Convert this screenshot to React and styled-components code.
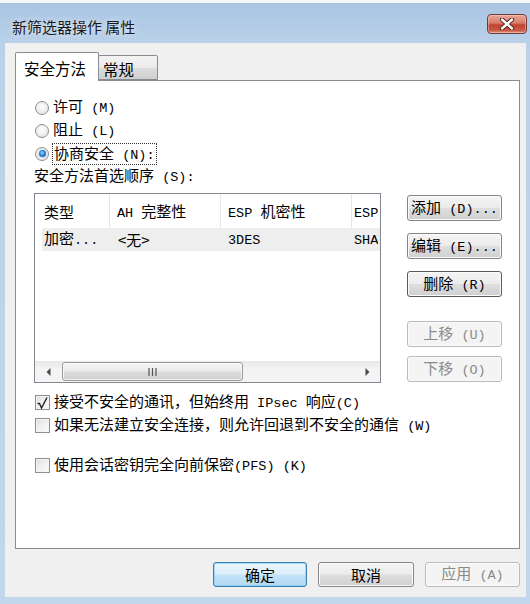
import React from "react";
import styled, { createGlobalStyle } from "styled-components";

const CJK = `"Noto Sans CJK SC", "Noto Sans", sans-serif`;
const MONO = `"Liberation Mono", "DejaVu Sans Mono", monospace`;

const Global = createGlobalStyle`
  html, body { margin: 0; padding: 0; background: #f3f5f8; }
  * { box-sizing: border-box; }
  #root { width: 530px; height: 604px; overflow: hidden; }
`;

const Window = styled.div`
  width: 530px;
  height: 601px;
  margin-top: 3px;
  background: linear-gradient(180deg, #a9c4e2 0px, #bad1e9 40px, #c2d7ec 100%);
  display: flex;
  flex-direction: column;
  font-family: ${CJK};
  color: #000;
`;

const TitleBar = styled.div`
  height: 40px;
  flex: none;
  display: flex;
  align-items: flex-start;
  justify-content: space-between;
  padding: 0 3px 0 12px;
`;

const Title = styled.div`
  padding-top: 13px;
  font-size: 15px;
  line-height: 22px;
  color: #1a1a1a;
  text-shadow: 0 0 6px rgba(255, 255, 255, 0.8);
`;

const CloseButton = styled.div`
  margin-top: 11px;
  width: 40px;
  height: 20px;
  border: 1px solid #6e3b3b;
  border-radius: 4px;
  background: linear-gradient(180deg, #e9a899 0%, #d67b67 45%, #c2432f 55%, #c85a45 85%, #e39a7f 100%);
  box-shadow: inset 0 0 0 1px rgba(255, 210, 200, 0.45);
  display: flex;
  align-items: center;
  justify-content: center;
`;

const Client = styled.div`
  flex: 1;
  margin: 0 4px 7px 5px;
  background: #f0f0f0;
  display: flex;
  flex-direction: column;
  padding: 9px 6px 10px 10px;
`;

const TabStrip = styled.div`
  height: 28px;
  flex: none;
  display: flex;
  align-items: flex-end;
  position: relative;
  z-index: 1;
`;

const Tab = styled.div`
  height: ${(p) => (p.$active ? 29 : 25)}px;
  width: ${(p) => p.$w}px;
  margin-bottom: ${(p) => (p.$active ? -1 : 0)}px;
  margin-left: ${(p) => (p.$active ? 0 : -1)}px;
  border: 1px solid #898c95;
  border-bottom: ${(p) => (p.$active ? "none" : "1px solid #898c95")};
  border-radius: 2px 2px 0 0;
  background: ${(p) =>
    p.$active ? "#ffffff" : "linear-gradient(180deg, #f3f3f3 0%, #ebebeb 50%, #dddddd 51%, #cfcfcf 100%)"};
  padding-left: ${(p) => p.$pad}px;
  padding-top: ${(p) => (p.$active ? 4 : 2)}px;
  font-size: 15.5px;
  line-height: 22px;
  white-space: nowrap;
  position: relative;
  z-index: ${(p) => (p.$active ? 2 : 1)};
`;

const Panel = styled.div`
  height: 469px;
  flex: none;
  border: 1px solid #898c95;
  background: #fff;
  padding: 15px 18px 0 18px;
  display: flex;
  flex-direction: column;
`;

const OptionRow = styled.div`
  height: 23px;
  display: flex;
  align-items: center;
  font-size: 15px;
  line-height: 20px;
  white-space: nowrap;
  margin-top: ${(p) => p.$mt || 0}px;
`;

const Label = styled.span`
  display: inline-block;
  white-space: pre;
  line-height: 20px;
  overflow: ${(p) => (p.$clip ? "hidden" : "visible")};
`;

const RadioCircle = styled.span`
  width: 14px;
  height: 14px;
  margin-left: 1px;
  margin-right: 4px;
  flex: none;
  border-radius: 50%;
  border: 1px solid #8e8f8f;
  background: radial-gradient(circle at 50% 40%, #ffffff 0%, #ececec 60%, #d8d8d8 100%);
  display: flex;
  align-items: center;
  justify-content: center;
`;

const RadioDot = styled.span`
  width: 7px;
  height: 7px;
  border-radius: 50%;
  background: radial-gradient(circle at 45% 40%, #9fd6ff 0%, #2b86d6 45%, #0d4f99 100%);
  box-shadow: 0 0 1px #1c5fa8;
`;

const FocusLabel = styled(Label)`
  outline: 1px dotted #333;
  padding: 0 1px;
  line-height: 17px;
`;

const Mono = styled.span`
  font-family: ${MONO};
  font-size: 13.5px;
`;

const Caption = styled.div`
  height: 23px;
  display: flex;
  align-items: center;
  font-size: 15px;
  line-height: 20px;
  white-space: nowrap;
`;

const ListArea = styled.div`
  margin-top: 5px;
  display: flex;
  align-items: flex-start;
`;

const ListView = styled.div`
  width: 347px;
  height: 190px;
  flex: none;
  border: 1px solid #828790;
  background: #fff;
  display: flex;
  flex-direction: column;
  overflow: hidden;
`;

const ListBody = styled.div`
  flex: 1;
  overflow: hidden;
`;

const HeaderRow = styled.div`
  height: 34px;
  display: flex;
  white-space: nowrap;
`;

const HeaderCell = styled.div`
  flex: 0 0 ${(p) => p.$w}px;
  min-width: 0;
  padding-left: ${(p) => p.$pad}px;
  padding-top: 2px;
  border-right: ${(p) => (p.$last ? "none" : "1px solid #e5e7ea")};
  display: flex;
  align-items: center;
  font-size: 15px;
  line-height: 20px;
  overflow: hidden;
`;

const DataRow = styled.div`
  height: 23px;
  margin-left: 7px;
  display: flex;
  background: #eeeeee;
  white-space: nowrap;
`;

const DataCell = styled.div`
  flex: 0 0 ${(p) => p.$w}px;
  min-width: 0;
  padding-left: ${(p) => p.$pad}px;
  display: flex;
  align-items: center;
  font-size: 15px;
  line-height: 20px;
  overflow: hidden;
`;

const ScrollBar = styled.div`
  height: 21px;
  flex: none;
  display: flex;
  align-items: center;
  background: linear-gradient(180deg, #e8e8e8 0%, #f4f4f4 40%, #f4f4f4 100%);
`;

const ScrollArrow = styled.div`
  width: 26px;
  height: 21px;
  flex: none;
  display: flex;
  align-items: center;
  justify-content: center;
`;

const Thumb = styled.div`
  width: 181px;
  height: 19px;
  margin-left: 1px;
  flex: none;
  border: 1px solid #9a9a9a;
  border-radius: 3px;
  background: linear-gradient(180deg, #f6f6f6 0%, #ececec 45%, #dcdcdc 55%, #d0d0d0 100%);
  box-shadow: inset 0 0 0 1px rgba(255, 255, 255, 0.7);
  display: flex;
  align-items: center;
  justify-content: center;
`;

const Spacer = styled.div`
  flex: 1;
`;

const SideButtons = styled.div`
  margin-left: 26px;
  padding-top: 2px;
  display: flex;
  flex-direction: column;
`;

const Button = styled.div`
  width: ${(p) => p.$w || 95}px;
  height: ${(p) => p.$h || 26}px;
  margin-top: ${(p) => p.$mt || 0}px;
  flex: none;
  border-radius: 3px;
  border: 1px solid
    ${(p) => (p.$disabled ? "#b7bbbe" : p.$default ? "#3c7fb1" : p.$dark ? "#5a5a5a" : "#858585")};
  background: ${(p) =>
    p.$disabled
      ? "#f4f4f4"
      : p.$default
      ? "linear-gradient(180deg, #eaf5fc 0%, #dceffb 48%, #c4e3f7 52%, #b3d9f3 100%)"
      : "linear-gradient(180deg, #f4f4f4 0%, #ececec 48%, #dedede 52%, #d0d0d0 100%)"};
  box-shadow: inset 0 0 0 1px
    ${(p) => (p.$disabled ? "#fbfbfb" : p.$default ? "rgba(120,200,245,0.6)" : "#fbfbfb")};
  color: ${(p) => (p.$disabled ? "#8a8a8a" : "#000")};
  display: flex;
  align-items: center;
  justify-content: center;
  font-size: 15px;
  line-height: 20px;
  white-space: nowrap;
`;

const CheckBox = styled.span`
  width: 15px;
  height: 15px;
  flex: none;
  margin-left: 1px;
  margin-right: 4px;
  border: 1px solid #8e8f8f;
  background: linear-gradient(135deg, #dcdcdc 0%, #f0f0f0 50%, #fafafa 100%);
  box-shadow: inset 0 0 0 1px #f4f4f4;
  display: flex;
  align-items: center;
  justify-content: center;
`;

const DialogButtons = styled.div`
  margin-top: 13px;
  height: 25px;
  display: flex;
  justify-content: flex-end;
  gap: 11px;
`;

const Key = ({ k, space = true, tail = "" }) => (
  <Mono>
    {space ? " " : ""}({k}){tail}
  </Mono>
);

const Radio = ({ checked }) => (
  <RadioCircle>{checked && <RadioDot />}</RadioCircle>
);

const Check = ({ checked }) => (
  <CheckBox>
    {checked && (
      <svg width="11" height="12" viewBox="0 0 11 12">
        <polyline points="0.5,6.5 2.5,6.5 4.5,11 10,0.5" fill="none" stroke="#222" strokeWidth="1.4" />
      </svg>
    )}
  </CheckBox>
);

export default function App() {
  return (
    <>
      <Global />
      <Window>
        <TitleBar>
          <Title>新筛选器操作 属性</Title>
          <CloseButton>
            <svg width="16" height="12" viewBox="0 0 16 12">
              <path d="M3 1.5 L13 10.5 M13 1.5 L3 10.5" stroke="#4a1c1c" strokeWidth="4.2" strokeLinecap="round" />
              <path d="M3 1.5 L13 10.5 M13 1.5 L3 10.5" stroke="#ffffff" strokeWidth="2.4" strokeLinecap="round" />
            </svg>
          </CloseButton>
        </TitleBar>
        <Client>
          <TabStrip>
            <Tab $active $w={84} $pad={8}>安全方法</Tab>
            <Tab $w={60} $pad={4}>常规</Tab>
          </TabStrip>
          <Panel>
            <OptionRow>
              <Radio />
              <Label>
                许可<Key k="M" />
              </Label>
            </OptionRow>
            <OptionRow>
              <Radio />
              <Label>
                阻止<Key k="L" />
              </Label>
            </OptionRow>
            <OptionRow>
              <Radio checked />
              <FocusLabel>
                协商安全<Key k="N" tail=":" />
              </FocusLabel>
            </OptionRow>
            <Caption>
              <Label>
                安全方法首选顺序<Key k="S" tail=":" />
              </Label>
            </Caption>
            <ListArea>
              <ListView>
                <ListBody>
                  <HeaderRow>
                    <HeaderCell $w={75} $pad={9}>
                      <Label>类型</Label>
                    </HeaderCell>
                    <HeaderCell $w={111} $pad={7}>
                      <Label>
                        <Mono>AH </Mono>完整性
                      </Label>
                    </HeaderCell>
                    <HeaderCell $w={131} $pad={7}>
                      <Label>
                        <Mono>ESP </Mono>机密性
                      </Label>
                    </HeaderCell>
                    <HeaderCell $w={26} $pad={2} $last>
                      <Label $clip>
                        <Mono>ESP </Mono>完整性
                      </Label>
                    </HeaderCell>
                  </HeaderRow>
                  <DataRow>
                    <DataCell $w={68} $pad={2}>
                      <Label>
                        加密<Mono>...</Mono>
                      </Label>
                    </DataCell>
                    <DataCell $w={111} $pad={8}>
                      <Label>&lt;无&gt;</Label>
                    </DataCell>
                    <DataCell $w={131} $pad={7}>
                      <Label>
                        <Mono>3DES</Mono>
                      </Label>
                    </DataCell>
                    <DataCell $w={26} $pad={2}>
                      <Label $clip>
                        <Mono>SHA1</Mono>
                      </Label>
                    </DataCell>
                  </DataRow>
                </ListBody>
                <ScrollBar>
                  <ScrollArrow>
                    <svg width="5" height="8" viewBox="0 0 5 8">
                      <path d="M4.5 0 L0.5 4 L4.5 8 Z" fill="#4a4a4a" />
                    </svg>
                  </ScrollArrow>
                  <Thumb>
                    <svg width="9" height="8" viewBox="0 0 9 8">
                      <path d="M1 0 V8 M4.5 0 V8 M8 0 V8" stroke="#555" strokeWidth="1.2" />
                    </svg>
                  </Thumb>
                  <Spacer />
                  <ScrollArrow>
                    <svg width="5" height="8" viewBox="0 0 5 8">
                      <path d="M0.5 0 L4.5 4 L0.5 8 Z" fill="#4a4a4a" />
                    </svg>
                  </ScrollArrow>
                </ScrollBar>
              </ListView>
              <SideButtons>
                <Button>
                  <Label>
                    添加<Key k="D" tail="..." />
                  </Label>
                </Button>
                <Button $mt={12}>
                  <Label>
                    编辑<Key k="E" tail="..." />
                  </Label>
                </Button>
                <Button $mt={12} $dark>
                  <Label>
                    删除<Key k="R" />
                  </Label>
                </Button>
                <Button $mt={24} $disabled>
                  <Label>
                    上移<Key k="U" />
                  </Label>
                </Button>
                <Button $mt={9} $disabled>
                  <Label>
                    下移<Key k="O" />
                  </Label>
                </Button>
              </SideButtons>
            </ListArea>
            <OptionRow $mt={8}>
              <Check checked />
              <Label>
                接受不安全的通讯，但始终用<Mono> IPsec </Mono>响应<Key k="C" space={false} />
              </Label>
            </OptionRow>
            <OptionRow>
              <Check />
              <Label>
                如果无法建立安全连接，则允许回退到不安全的通信<Key k="W" />
              </Label>
            </OptionRow>
            <OptionRow $mt={17}>
              <Check />
              <Label>
                使用会话密钥完全向前保密<Mono>(PFS)</Mono>
                <Key k="K" />
              </Label>
            </OptionRow>
          </Panel>
          <DialogButtons>
            <Button $w={94} $h={25} $default>
              <Label>确定</Label>
            </Button>
            <Button $w={96} $h={25}>
              <Label>取消</Label>
            </Button>
            <Button $w={95} $h={25} $disabled>
              <Label>
                应用<Key k="A" />
              </Label>
            </Button>
          </DialogButtons>
        </Client>
      </Window>
    </>
  );
}
